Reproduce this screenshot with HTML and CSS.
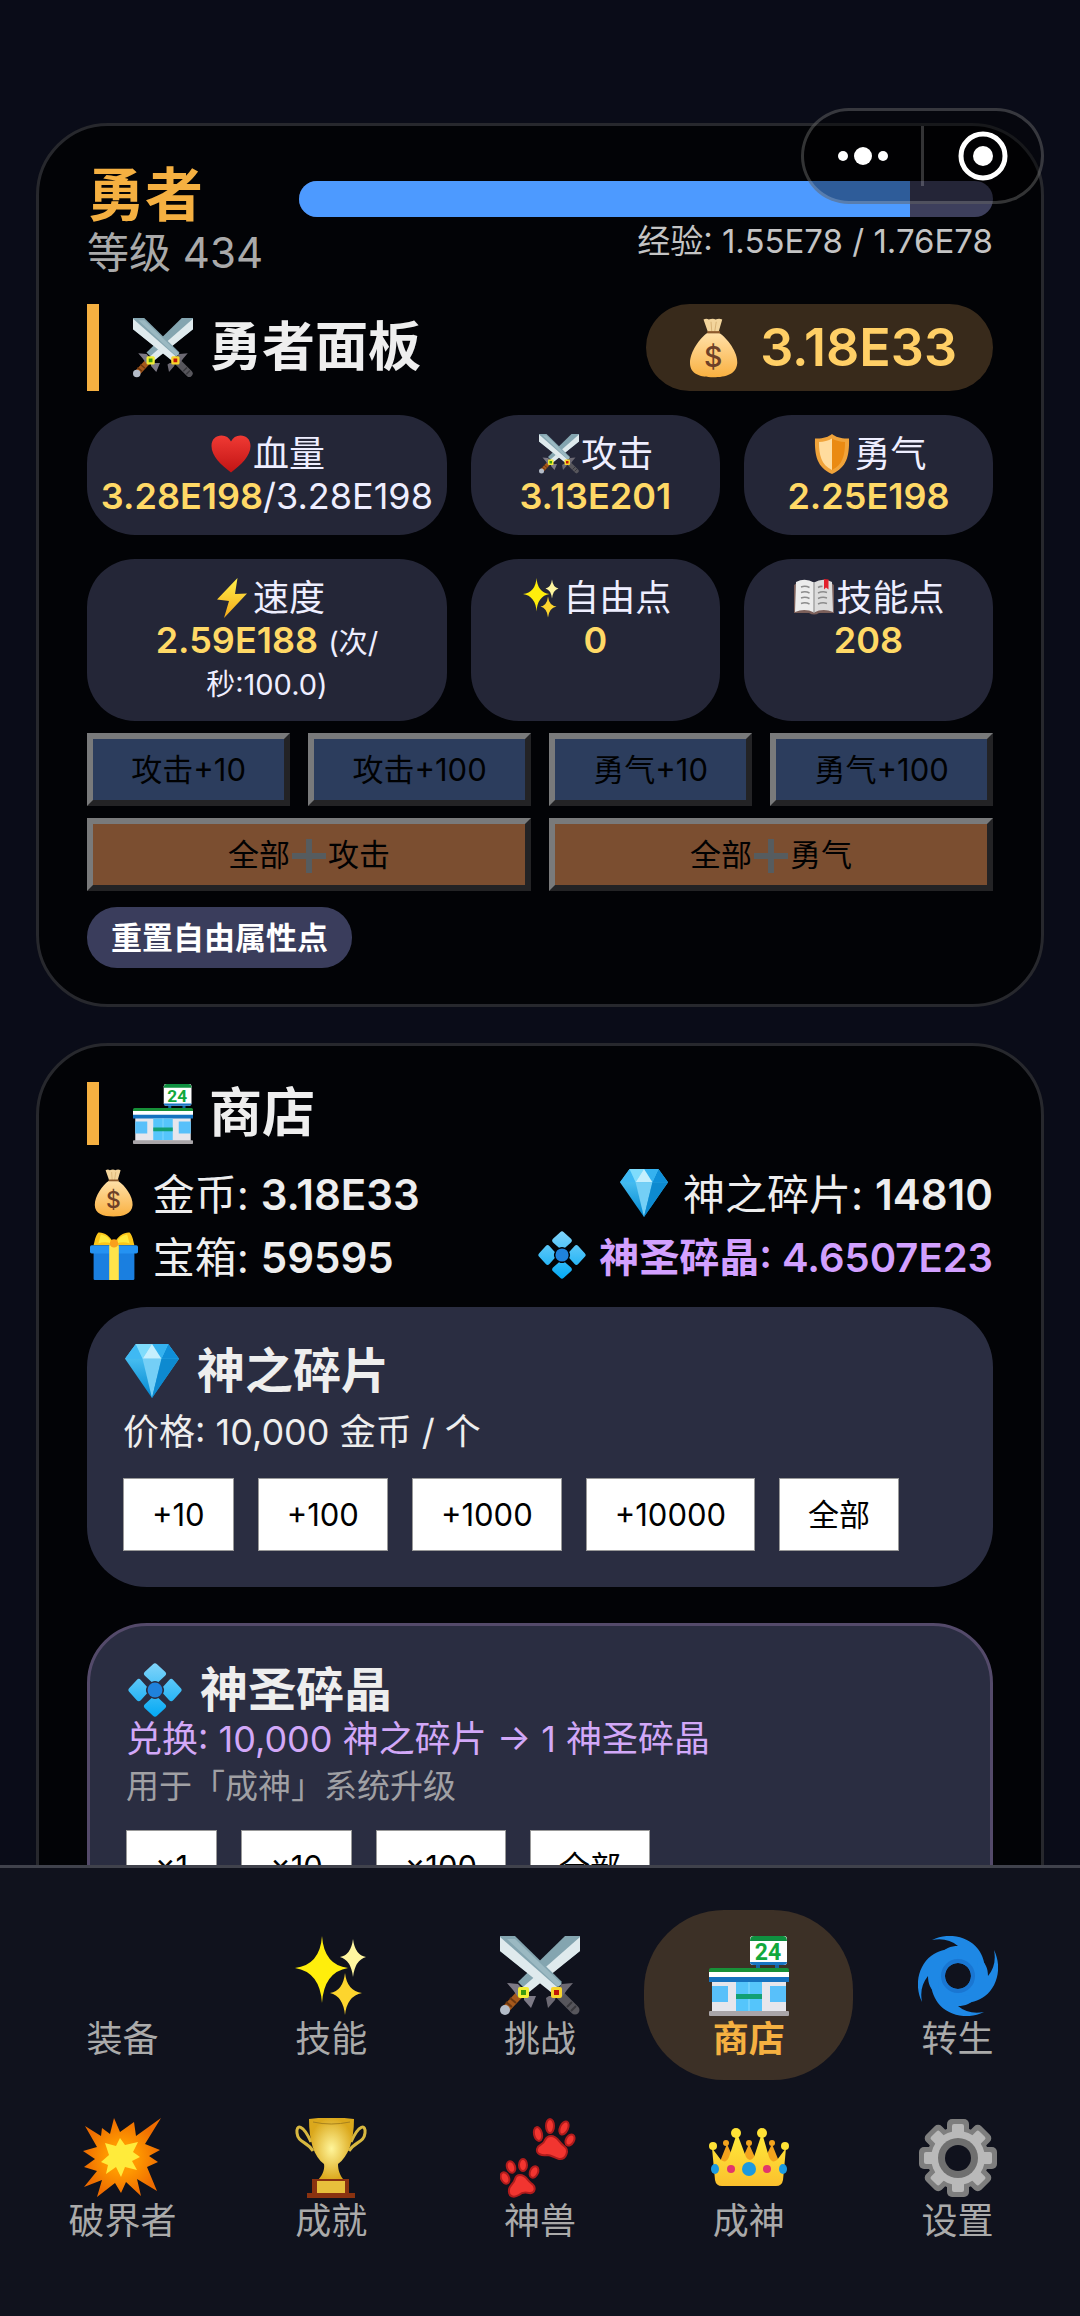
FILE: index.html
```html
<!DOCTYPE html>
<html lang="zh-CN">
<head>
    <meta charset="UTF-8">
    <meta name="viewport" content="width=device-width, initial-scale=1.0">
    <title>勇者</title>
    <link rel="stylesheet" href="styles.css">
</head>
<body>

    <!-- 图标 -->
    <svg class="sprite" width="0" height="0" aria-hidden="true">
        <defs>
            <linearGradient id="gGem" x1="0" y1="0" x2="0" y2="1"><stop offset="0" stop-color="#5fd0fb"/><stop offset="1" stop-color="#0288d1"/></linearGradient>
            <linearGradient id="gPetal" gradientUnits="userSpaceOnUse" x1="0" y1="0" x2="0" y2="80"><stop offset="0" stop-color="#81d4fa"/><stop offset="1" stop-color="#03a9f4"/></linearGradient>
            <linearGradient id="gBag" x1="0" y1="0" x2="0" y2="1"><stop offset="0" stop-color="#ffe0a8"/><stop offset="1" stop-color="#f9b040"/></linearGradient>
            <linearGradient id="gHeart" x1="0" y1="0" x2="0" y2="1"><stop offset="0" stop-color="#f03a34"/><stop offset="1" stop-color="#c21414"/></linearGradient>
            <linearGradient id="gBolt" x1="0" y1="0" x2="0" y2="1"><stop offset="0" stop-color="#fff04a"/><stop offset="1" stop-color="#f5a91a"/></linearGradient>
            <linearGradient id="gCrown" x1="0" y1="0" x2="0" y2="1"><stop offset="0" stop-color="#ffeb3b"/><stop offset="1" stop-color="#fbc02d"/></linearGradient>
            <radialGradient id="gCup"><stop offset="0" stop-color="#fff59a"/><stop offset="1" stop-color="#dba81c"/></radialGradient>
            <radialGradient id="gBoom"><stop offset="0.4" stop-color="#ff9800"/><stop offset="1" stop-color="#ee6c00"/></radialGradient>
        </defs>
        <symbol id="swords" viewBox="0 0 80 80">
            <path d="M80 0H65L18 46l10 10L80 15z" fill="#84a5b0"/>
            <path d="M80 1v14L28 57l-5-6z" fill="#dfeaed"/>
            <path d="M20 58L4 75" stroke="#a5581c" stroke-width="8"/>
            <path d="M16 67l-6-5M12 71l-6-5" stroke="#6d3810" stroke-width="2"/>
            <circle cx="5" cy="74" r="5" fill="#b4bcc8"/>
            <path d="M7 47l11 1 6 6-6 7-5-7zM24 60l7 0 5 0-5 12-7-8z" fill="#7d7a86"/>
            <path d="M0 0h15l47 46-10 10L0 15z" fill="#84a5b0"/>
            <path d="M0 1v14l52 42 5-6z" fill="#dfeaed"/>
            <path d="M7 3h8l47 45-4 3z" fill="#9bb9c2"/>
            <path d="M60 59l15 15" stroke="#57565c" stroke-width="9" stroke-linecap="round"/>
            <path d="M67 71l5-5M71 75l5-5" stroke="#39383d" stroke-width="2"/>
            <path d="M73 47l-11 1-6 6 6 7 5-7zM56 60l-7 0-3 2 2 10 7-8z" fill="#6c6973"/>
            <rect x="18" y="51" width="11" height="11" rx="2" fill="#f2ee35"/>
            <rect x="21" y="54" width="5" height="5" fill="#3c9a10"/>
            <rect x="51" y="51" width="11" height="11" rx="2" fill="#f8d52c"/>
            <rect x="54" y="54" width="5" height="5" fill="#c21608"/>
        </symbol>
        <symbol id="bag" viewBox="0 0 80 80">
            <path d="M26 2q4-2 7 0 6-2 9 0 5-2 9 0l-5 17H32z" fill="#f3d59c"/>
            <path d="M36 5l1 13M43 5l-2 13" stroke="#cda667" stroke-width="1"/>
            <path d="M31 20h16c11 7 25 26 24 40-1 15-15 19-32 19S8 75 8 60c0-15 13-33 23-40z" fill="url(#gBag)"/>
            <path d="M31 19h17" stroke="#8d5a2c" stroke-width="3"/>
        </symbol>
        <symbol id="heart" viewBox="0 0 80 80">
            <path d="M40 77C20 62 1 44 1 24 1 10 10 3 21 3c9 0 15 4 19 12C44 7 50 3 59 3c11 0 20 7 20 21 0 20-19 38-39 53z" fill="url(#gHeart)"/>
        </symbol>
        <symbol id="shield" viewBox="0 0 80 80">
            <path d="M40 0C33 6 20 10 6 9c-1 34 4 58 34 71 30-13 35-37 34-71C60 10 47 6 40 0z" fill="#f0a33a"/>
            <path d="M40 9c-7 4-17 7-26 7 0 26 4 45 26 56z" fill="#ffdc9e"/>
            <path d="M40 9c7 4 17 7 26 7 0 26-4 45-26 56z" fill="#ea8a12"/>
        </symbol>
        <symbol id="bolt" viewBox="0 0 80 80">
            <path d="M53 0L12 43l24 3-10 34 46-49-24 1z" fill="url(#gBolt)"/>
        </symbol>
        <symbol id="sparkles" viewBox="0 0 80 80">
            <path d="M31 0Q33 29 57 32 33 36 31 67 29 36 4 32 29 29 31 0z" fill="#ffee0c"/>
            <path d="M62 3q2 16 13 18-11 3-13 20-2-17-13-20 11-2 13-18z" fill="#fff6a0"/>
            <path d="M54 37q2 18 17 20-15 3-17 22-2-19-15-22 13-2 15-20z" fill="#fdd52e"/>
        </symbol>
        <symbol id="book" viewBox="0 0 80 80">
            <path d="M0 14l6-4h68l6 4v56H50q-10 6-20 0H0z" fill="#7b5f5a"/>
            <path d="M4 8q18-9 36 1v60q-18-9-38-1z" fill="#ececec"/>
            <path d="M76 8q-18-9-36 1v60q18-9 38-1z" fill="#dcdcdc"/>
            <path d="M40 9v60" stroke="#a5a5a5" stroke-width="3"/>
            <path d="M14 18q9-3 17 1M14 29q9-3 17 1M14 40q9-3 17 1M14 51q9-3 17 1M48 19q5-3 9-2M48 30q9-4 18-1M48 41q9-4 18-1M48 52q9-4 18-1" fill="none" stroke="#8c8c8c" stroke-width="3"/>
            <path d="M60 2l9 1v20l-5-4-4 4z" fill="#e3202c"/>
        </symbol>
        <symbol id="plus" viewBox="0 0 80 80">
            <path d="M33 0h14v33h33v14H47v33H33V47H0V33h33z" fill="#aab4b8"/>
        </symbol>
        <symbol id="shop" viewBox="0 0 80 80">
            <rect x="47" y="28" width="4" height="5" fill="#1565a5"/>
            <rect x="66" y="28" width="4" height="5" fill="#1565a5"/>
            <rect x="41" y="0" width="37" height="29" rx="3" fill="#fff"/>
            <path d="M41 5q0-5 4-5h29q4 0 4 5z" fill="#0f9040"/>
            <path d="M41 26h37q0 3-4 3H45q-4 0-4-3z" fill="#1976c4"/>
            <rect x="3" y="44" width="74" height="32" fill="#e6e6ec"/>
            <rect x="0" y="32" width="80" height="5" rx="2" fill="#179038"/>
            <rect x="0" y="36" width="80" height="6" fill="#fff"/>
            <path d="M0 41h80v5H0z" fill="#1572bf"/>
            <rect x="3" y="50" width="16" height="16" fill="#58c0fa"/>
            <rect x="61" y="50" width="16" height="16" fill="#58c0fa"/>
            <rect x="27" y="46" width="26" height="29" fill="#55c5fb"/>
            <path d="M40 46v29" stroke="#8fdcff" stroke-width="1"/>
            <rect x="27" y="58" width="26" height="5" fill="#12a074"/>
            <rect x="0" y="75" width="80" height="5" rx="1" fill="#a9a5a8"/>
        </symbol>
        <symbol id="gem" viewBox="0 0 80 80">
            <path d="M16 0h48l16 22-40 58L0 22z" fill="url(#gGem)"/>
            <path d="M16 0L0 22h26z" fill="#3fb9f3"/>
            <path d="M64 0l16 22H54z" fill="#0f8fd8"/>
            <path d="M16 0h24L26 22z" fill="#7fdcfc"/>
            <path d="M40 0h24L54 22z" fill="#35b2ef"/>
            <path d="M40 0L26 22h28z" fill="#c5effd"/>
            <path d="M26 22h28L40 80z" fill="#74cff6"/>
            <path d="M54 22h26L40 80z" fill="#0d8ad0"/>
        </symbol>
        <symbol id="gift" viewBox="0 0 80 80">
            <path d="M40 20C34 6 22 0 14 1 8 8 8 16 6 22h34z" fill="#fbc61a"/>
            <path d="M40 20C46 6 58 0 66 1c6 7 6 15 8 21H40z" fill="#fbc61a"/>
            <path d="M18 4q14 2 18 15-12-4-22 0zM62 4q-14 2-18 15 12-4 22 0z" fill="#ffe93c"/>
            <rect x="6" y="34" width="68" height="46" rx="2" fill="#1a7fe0"/>
            <rect x="0" y="22" width="80" height="14" rx="3" fill="#2492f2"/>
            <rect x="32" y="22" width="16" height="58" fill="#ffe34a"/>
            <circle cx="40" cy="19" r="7" fill="#f9a01c"/>
        </symbol>
        <symbol id="flower" viewBox="0 0 80 80">
            <g fill="url(#gPetal)">
                <path d="M37 2q3-3 6 0l12 11q3 3 0 6L45 28q-5-3-10 0L25 19q-3-3 0-6z"/>
                <path d="M37 78q3 3 6 0l12-11q3-3 0-6L45 52q-5 3-10 0L25 61q-3 3 0 6z"/>
                <path d="M2 37q-3 3 0 6l11 12q3 3 6 0L28 45q-3-5 0-10L19 25q-3-3-6 0z"/>
                <path d="M78 37q3 3 0 6L67 55q-3 3-6 0L52 45q3-5 0-10L61 25q3-3 6 0z"/>
            </g>
            <circle cx="40" cy="40" r="11" fill="#1f82dc"/>
        </symbol>
        <symbol id="cyclone" viewBox="0 0 80 80">
            <g fill="#1e88e5">
                <path d="M40 12a28 28 0 1 0 .1 0zM40 27a13 13 0 1 1-.1 0z" fill-rule="evenodd"/>
                <path id="arm" d="M14 4C30-4 50 0 60 13c6 8 8 18 7 28l-12-2C52 26 42 20 22 20c4-8 11-10 18-10C33 4 24 2 14 4z"/>
                <use href="#arm" transform="rotate(90 40 40)"/>
                <use href="#arm" transform="rotate(180 40 40)"/>
                <use href="#arm" transform="rotate(270 40 40)"/>
            </g>
            <circle cx="40" cy="40" r="15" fill="none" stroke="#1976d2" stroke-width="4"/>
        </symbol>
        <symbol id="boom" viewBox="0 0 80 80">
            <path d="M32 0l6 14 14-10 2 14L79 0 63 26l15 6-11 6 9 6-11 5 10 24-20-12 4 17-15-14-5 11-6-10-18 14 5-17-18 7 13-16-13-4 11-8L1 33l14-4L3 8l16 10 1-8 8 6z" fill="url(#gBoom)"/>
            <path d="M23 25l11 3 4-8 5 7 13-3-5 10 7 5-8 4 5 9-12-3-4 10-5-10-10 7 2-9-7-3 8-7z" fill="#ffeb3b"/>
        </symbol>
        <symbol id="trophy" viewBox="0 0 80 80">
            <path d="M20 24C12 6 5 6 6 15c1 10 10 8 16 18M60 24C68 6 75 6 74 15c-1 10-10 8-16 18" fill="none" stroke="#d8b840" stroke-width="3"/>
            <path d="M18 1q22-3 45 0c0 22-6 38-16 45 0 6 2 12 6 16H27c4-4 7-10 6-16C23 39 18 23 18 1z" fill="url(#gCup)"/>
            <path d="M22 4q18 4 37 0" fill="none" stroke="#a8821c" stroke-width="1"/>
            <path d="M21 61h37v14h6v5H16v-5h5z" fill="#8a3210"/>
            <rect x="26" y="63" width="28" height="12" fill="#e8bf3c"/>
        </symbol>
        <symbol id="paws" viewBox="0 0 80 80">
            <g fill="#f23530" stroke="#b01c1c" stroke-width="2">
                <ellipse cx="38" cy="16" rx="4" ry="7" transform="rotate(-12 38 16)"/>
                <ellipse cx="50" cy="8" rx="4" ry="7"/>
                <ellipse cx="64" cy="10" rx="4" ry="7" transform="rotate(25 64 10)"/>
                <ellipse cx="70" cy="22" rx="4" ry="6" transform="rotate(30 70 22)"/>
                <path d="M51 18c7 0 8 7 13 10 6 4 2 14-5 13-5-1-7-4-12-4-5 1-11-1-10-6 1-5 6-3 8-9q2-4 6-4z"/>
                <ellipse cx="5" cy="60" rx="4" ry="6" transform="rotate(-25 5 60)"/>
                <ellipse cx="11" cy="49" rx="4" ry="6" transform="rotate(-20 11 49)"/>
                <ellipse cx="23" cy="47" rx="4" ry="6"/>
                <ellipse cx="34" cy="54" rx="4" ry="6" transform="rotate(25 34 54)"/>
                <path d="M20 57c6 0 7 5 11 8 6 4 4 11-2 10-4-1-7-1-10 2-5 3-11 2-10-5 0-5 5-6 6-11q1-4 5-4z"/>
            </g>
        </symbol>
        <symbol id="crown" viewBox="0 0 80 80">
            <path d="M10 46l8-20 9 20zM31 46l9-20 9 20zM53 46l10-20 8 20z" fill="#f2a31d"/>
            <circle cx="17" cy="25" r="3" fill="#f2a31d"/><circle cx="40" cy="25" r="3" fill="#f2a31d"/><circle cx="63" cy="25" r="3" fill="#f2a31d"/>
            <path d="M3 30l3 32q1 6 7 6h54q6 0 7-6l3-32-9 12q-5 4-8-3l-7-24-8 24q-4 6-8 0l-9-24-8 24q-3 7-8 3z" fill="url(#gCrown)"/>
            <circle cx="4" cy="28" r="4" fill="#ffe236"/><circle cx="27" cy="15" r="5" fill="#ffe236"/><circle cx="53" cy="15" r="5" fill="#ffe236"/><circle cx="76" cy="28" r="4" fill="#ffe236"/>
            <ellipse cx="6" cy="51" rx="4" ry="5" fill="#1b9ae0"/><circle cx="22" cy="51" r="4" fill="#e2356c"/><circle cx="40" cy="51" r="7" fill="#1b9ae0"/><circle cx="58" cy="51" r="4" fill="#e2356c"/><ellipse cx="74" cy="51" rx="4" ry="5" fill="#1b9ae0"/>
        </symbol>
        <symbol id="gear" viewBox="0 0 80 80">
            <g fill="#7e7e7e">
                <circle cx="40" cy="40" r="31"/>
                <rect x="29" y="1" width="22" height="78" rx="5"/>
                <rect x="29" y="1" width="22" height="78" rx="5" transform="rotate(45 40 40)"/>
                <rect x="29" y="1" width="22" height="78" rx="5" transform="rotate(90 40 40)"/>
                <rect x="29" y="1" width="22" height="78" rx="5" transform="rotate(135 40 40)"/>
            </g>
            <g fill="#b9b9b9">
                <circle cx="40" cy="40" r="27"/>
                <rect x="34" y="6" width="12" height="68" rx="2"/>
                <rect x="34" y="6" width="12" height="68" rx="2" transform="rotate(45 40 40)"/>
                <rect x="34" y="6" width="12" height="68" rx="2" transform="rotate(90 40 40)"/>
                <rect x="34" y="6" width="12" height="68" rx="2" transform="rotate(135 40 40)"/>
            </g>
            <circle cx="40" cy="40" r="20" fill="#6f6f6f"/>
            <circle cx="40" cy="40" r="13" fill="#10121d"/>
        </symbol>
    </svg>

    <!-- 小程序胶囊按钮 -->
    <div class="capsule">
        <button class="capsule-btn" aria-label="更多">
            <svg width="52" height="20" viewBox="0 0 52 20" fill="#fff"><circle cx="6" cy="10" r="5"/><circle cx="26" cy="10" r="9"/><circle cx="46" cy="10" r="5"/></svg>
        </button>
        <button class="capsule-btn" aria-label="关闭">
            <svg width="52" height="52" viewBox="0 0 52 52"><circle cx="26" cy="26" r="22" fill="none" stroke="#fff" stroke-width="5"/><circle cx="26" cy="26" r="10" fill="#fff"/></svg>
        </button>
    </div>

    <main class="content">
        <!-- 勇者面板 -->
        <section class="card">
            <div class="hero">
                <div class="hero-info">
                    <div class="hero-name">勇者</div>
                    <div class="hero-level">等级 434</div>
                </div>
                <div class="exp">
                    <div class="exp-bar"><div class="exp-fill" style="width: 88%"></div></div>
                    <div class="exp-text">经验: 1.55E78 / 1.76E78</div>
                </div>
            </div>

            <div class="panel-head">
                <h2 class="title"><svg class="ico"><use href="#swords"/></svg> 勇者面板</h2>
                <div class="gold"><svg class="ico" viewBox="0 0 80 80"><use href="#bag"/><text class="bag-text" x="39" y="65">$</text></svg> 3.18E33</div>
            </div>

            <div class="stats">
                <div class="stat"><div><svg class="ico"><use href="#heart"/></svg>血量</div><div><b>3.28E198</b>/3.28E198</div></div>
                <div class="stat"><div><svg class="ico"><use href="#swords"/></svg>攻击</div><div><b>3.13E201</b></div></div>
                <div class="stat"><div><svg class="ico"><use href="#shield"/></svg>勇气</div><div><b>2.25E198</b></div></div>
                <div class="stat"><div><svg class="ico"><use href="#bolt"/></svg>速度</div><div><b>2.59E188</b> <small>(次/<br>秒:100.0)</small></div></div>
                <div class="stat"><div><svg class="ico"><use href="#sparkles"/></svg>自由点</div><div><b>0</b></div></div>
                <div class="stat"><div><svg class="ico"><use href="#book"/></svg>技能点</div><div><b>208</b></div></div>
            </div>

            <div class="add-row">
                <button class="add-btn" disabled>攻击+10</button>
                <button class="add-btn" disabled>攻击+100</button>
                <button class="add-btn" disabled>勇气+10</button>
                <button class="add-btn" disabled>勇气+100</button>
            </div>
            <div class="add-row">
                <button class="add-btn all" disabled>全部<svg class="ico"><use href="#plus"/></svg>攻击</button>
                <button class="add-btn all" disabled>全部<svg class="ico"><use href="#plus"/></svg>勇气</button>
            </div>
            <button class="reset-btn">重置自由属性点</button>
        </section>

        <!-- 商店 -->
        <section class="card">
            <h2 class="title"><svg class="ico" viewBox="0 0 80 80"><use href="#shop"/><text class="shop-text" x="59" y="24">24</text></svg> 商店</h2>
            <div class="wallet">
                <div><svg class="ico" viewBox="0 0 80 80"><use href="#bag"/><text class="bag-text" x="39" y="65">$</text></svg> 金币: <b>3.18E33</b></div>
                <div><svg class="ico"><use href="#gem"/></svg> 神之碎片: <b>14810</b></div>
                <div><svg class="ico"><use href="#gift"/></svg> 宝箱: <b>59595</b></div>
                <div class="holy"><svg class="ico"><use href="#flower"/></svg> 神圣碎晶: 4.6507E23</div>
            </div>

            <div class="goods">
                <h3 class="goods-name"><svg class="ico"><use href="#gem"/></svg> 神之碎片</h3>
                <p class="goods-price">价格: 10,000 金币 / 个</p>
                <div class="buy-row">
                    <button class="buy-btn">+10</button>
                    <button class="buy-btn">+100</button>
                    <button class="buy-btn">+1000</button>
                    <button class="buy-btn">+10000</button>
                    <button class="buy-btn">全部</button>
                </div>
            </div>

            <div class="goods goods-holy">
                <h3 class="goods-name"><svg class="ico"><use href="#flower"/></svg> 神圣碎晶</h3>
                <p class="goods-trade">兑换: 10,000 神之碎片 → 1 神圣碎晶</p>
                <p class="goods-note">用于「成神」系统升级</p>
                <div class="buy-row">
                    <button class="buy-btn">×1</button>
                    <button class="buy-btn">×10</button>
                    <button class="buy-btn">×100</button>
                    <button class="buy-btn">全部</button>
                </div>
            </div>
        </section>
    </main>

    <nav class="tabbar">
        <a class="tab" href="#equip"><svg class="ico"></svg>装备</a>
        <a class="tab" href="#skill"><svg class="ico"><use href="#sparkles"/></svg>技能</a>
        <a class="tab" href="#fight"><svg class="ico"><use href="#swords"/></svg>挑战</a>
        <a class="tab active" href="#store"><svg class="ico" viewBox="0 0 80 80"><use href="#shop"/><text class="shop-text" x="59" y="24">24</text></svg>商店</a>
        <a class="tab" href="#rebirth"><svg class="ico"><use href="#cyclone"/></svg>转生</a>
        <a class="tab" href="#breaker"><svg class="ico"><use href="#boom"/></svg>破界者</a>
        <a class="tab" href="#award"><svg class="ico"><use href="#trophy"/></svg>成就</a>
        <a class="tab" href="#pet"><svg class="ico"><use href="#paws"/></svg>神兽</a>
        <a class="tab" href="#god"><svg class="ico"><use href="#crown"/></svg>成神</a>
        <a class="tab" href="#setting"><svg class="ico"><use href="#gear"/></svg>设置</a>
    </nav>

</body>
</html>
```
FILE: styles.css
```css
* {
    box-sizing: border-box;
}

body {
    margin: 0;
    height: 100vh;
    display: flex;
    flex-direction: column;
    background: #0a0c18;
    color: #eee;
    font-family: Inter, "Noto Sans CJK SC", sans-serif;
    font-size: 36px;
    line-height: 42px;
}

button {
    font-family: inherit;
    font-size: 31px;
    line-height: 37px;
    cursor: pointer;
}

h2, h3, p {
    margin: 0;
}

b {
    font-weight: 600;
}

.sprite {
    position: absolute;
}

.ico {
    width: 40px;
    height: 40px;
    margin: 0 2px;
    flex-shrink: 0;
    overflow: visible;
    vertical-align: -7px;
}

.bag-text {
    font-size: 38px;
    font-weight: 500;
    text-anchor: middle;
    fill: #6d4028;
}

.shop-text {
    font-family: Roboto, sans-serif;
    font-size: 23px;
    font-weight: bold;
    text-anchor: middle;
    fill: #12a83c;
}

.content {
    flex: 1;
    min-height: 0;
    overflow-y: auto;
    scrollbar-width: none;
    padding: 123px 36px 36px;
}

.card {
    background: #020306;
    border: 3px solid #27282d;
    border-radius: 72px;
    padding: 36px 48px;
    margin-bottom: 36px;
}

/* 胶囊 */
.capsule {
    position: absolute;
    top: 108px;
    right: 36px;
    z-index: 5;
    display: flex;
    width: 243px;
    height: 96px;
    padding: 15px 0;
    border: 3px solid rgba(255, 255, 255, 0.2);
    border-radius: 48px;
    background: rgba(0, 0, 0, 0.4);
}

.capsule-btn {
    flex: 1;
    display: flex;
    align-items: center;
    justify-content: center;
    padding: 0;
    border: none;
    background: none;
}

.capsule-btn + .capsule-btn {
    border-left: 3px solid rgba(255, 255, 255, 0.2);
}

/* 等级经验 */
.hero {
    display: flex;
    align-items: center;
    gap: 36px;
    margin-bottom: 26px;
}

.hero-name {
    font-size: 58px;
    line-height: 66px;
    font-weight: bold;
    color: #f5b041;
}

.hero-level {
    font-size: 42px;
    line-height: 50px;
    color: #aaa;
}

.exp {
    flex: 1;
}

.exp-bar {
    height: 36px;
    margin-bottom: 6px;
    border-radius: 18px;
    background: #3d3f5c;
    overflow: hidden;
}

.exp-fill {
    height: 100%;
    background: #4d9aff;
}

.exp-text {
    font-size: 33px;
    line-height: 36px;
    text-align: right;
    color: #c4c4c4;
}

.title {
    display: flex;
    align-items: center;
    gap: 14px;
    padding-left: 32px;
    border-left: 12px solid #f5b041;
    font-size: 53px;
    line-height: 63px;
}

.title .ico,
.gold .ico {
    width: 60px;
    height: 60px;
}

.panel-head {
    display: flex;
    justify-content: space-between;
    margin-bottom: 24px;
}

.gold {
    display: flex;
    align-items: center;
    gap: 14px;
    padding: 12px 36px;
    border-radius: 44px;
    background: #382a1b;
    color: #ffcf66;
    font-size: 52px;
    line-height: 63px;
    font-weight: 600;
}

/* 属性 */
.stats {
    display: grid;
    grid-template-columns: 13fr 9fr 9fr;
    gap: 24px;
}

.stat {
    padding: 18px 12px;
    border-radius: 48px;
    background: #242637;
    color: #eef;
    text-align: center;
    white-space: nowrap;
}

.stat b {
    color: #ffd966;
}

.stat small {
    font-size: 29px;
    line-height: 36px;
}

.add-row {
    display: flex;
    gap: 18px;
    margin-top: 12px;
}

.add-btn {
    flex: 1 1 auto;
    padding: 12px 24px;
    border: 6px solid;
    border-color: #f0f0f0 #444 #444 #f0f0f0;
    background: #5678b4;
    color: #000;
    opacity: 0.5;
}

.add-btn.all {
    background: #f4985a;
}

.add-btn .ico {
    width: 34px;
    height: 34px;
}

.reset-btn {
    display: block;
    margin-top: 16px;
    padding: 12px 24px;
    border: none;
    border-radius: 30px;
    background: #3a3d5c;
    color: #fff;
    font-weight: bold;
}

/* 商店 */
.wallet {
    display: grid;
    grid-template-columns: auto auto;
    justify-content: space-between;
    margin: 18px 0;
    font-size: 42px;
    line-height: 63px;
}

.wallet .ico {
    width: 48px;
    height: 48px;
    margin: 0 3px;
}

.wallet div:nth-child(even) {
    text-align: right;
}

.wallet .holy {
    color: #d2a0ff;
    font-size: 40px;
    font-weight: 600;
}

.goods {
    padding: 36px;
    margin-bottom: 36px;
    border-radius: 60px;
    background: #2a2d41;
}

.goods-holy {
    border: 3px solid #544a6a;
}

.goods-name {
    display: flex;
    align-items: center;
    gap: 16px;
    font-size: 48px;
    line-height: 56px;
}

.goods-name .ico {
    width: 54px;
    height: 54px;
}

.goods-price {
    margin-top: 12px;
    line-height: 43px;
}

.goods-trade {
    line-height: 43px;
    color: #d2a8f8;
}

.goods-note {
    margin-top: 6px;
    font-size: 33px;
    line-height: 39px;
    color: #a0a0a4;
}

.buy-row {
    display: flex;
    flex-wrap: wrap;
    gap: 24px;
    margin-top: 24px;
}

.buy-btn {
    padding: 17px 28px;
    border: 1px solid #999;
    background: #fff;
    color: #000;
}

/* 底部导航 */
.tabbar {
    display: grid;
    grid-template-columns: repeat(5, 1fr);
    row-gap: 12px;
    padding: 42px 18px 54px;
    border-top: 3px solid #40424c;
    background: #10121d;
}

.tab {
    display: flex;
    flex-direction: column;
    align-items: center;
    padding: 26px 0 20px;
    border-radius: 80px;
    color: #aaa;
    text-decoration: none;
}

.tab .ico {
    width: 80px;
    height: 80px;
    margin-bottom: 2px;
}

.tab.active {
    background: #3c3026;
    color: #f5b041;
    font-weight: bold;
}
```
